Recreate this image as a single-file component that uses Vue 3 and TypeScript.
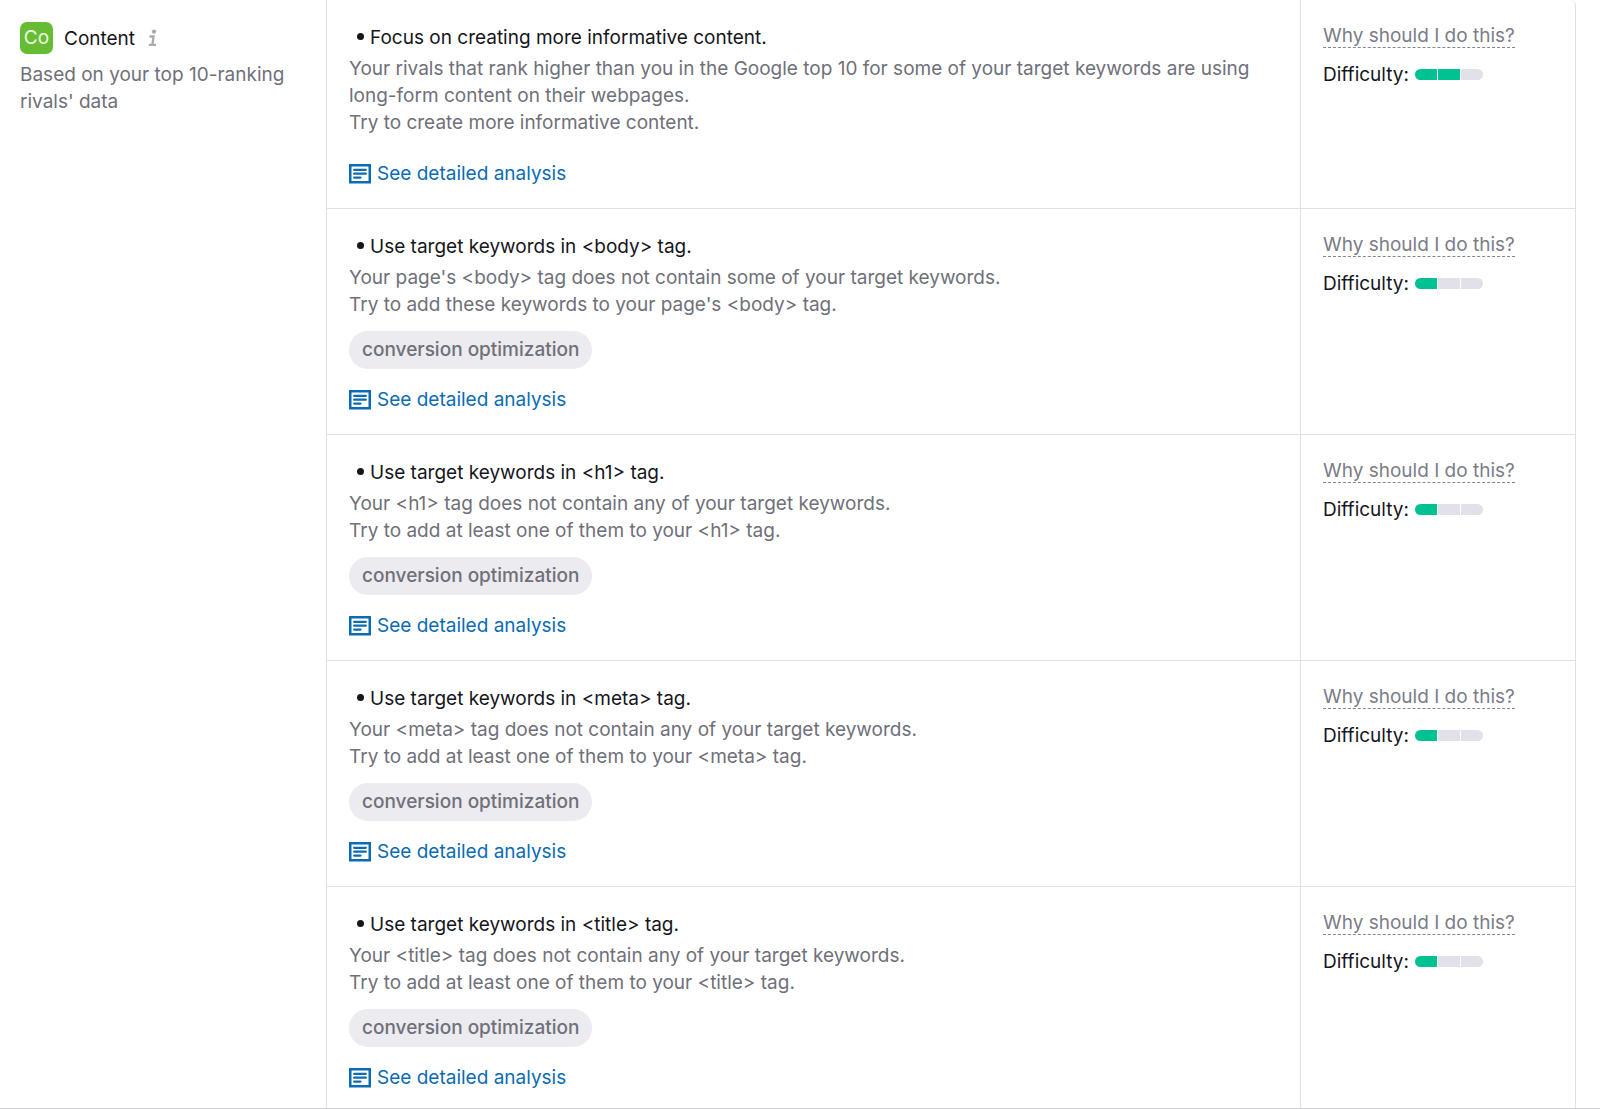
<script setup lang="ts">
interface Idea {
  title: string
  lines: string[]
  tags: string[]
  difficulty: number
}

const tag = 'conversion optimization'

const ideas: Idea[] = [
  {
    title: 'Focus on creating more informative content.',
    lines: [
      'Your rivals that rank higher than you in the Google top 10 for some of your target keywords are using long-form content on their webpages.',
      'Try to create more informative content.',
    ],
    tags: [],
    difficulty: 2,
  },
  {
    title: 'Use target keywords in <body> tag.',
    lines: [
      "Your page's <body> tag does not contain some of your target keywords.",
      "Try to add these keywords to your page's <body> tag.",
    ],
    tags: [tag],
    difficulty: 1,
  },
  ...['h1', 'meta', 'title'].map((name) => ({
    title: `Use target keywords in <${name}> tag.`,
    lines: [
      `Your <${name}> tag does not contain any of your target keywords.`,
      `Try to add at least one of them to your <${name}> tag.`,
    ],
    tags: [tag],
    difficulty: 1,
  })),
]
</script>

<template>
  <main class="page">
    <section class="card">
      <aside class="category">
        <header class="category-head">
          <span class="badge">Co</span>
          <h2 class="category-name">Content</h2>
          <button class="info" type="button" aria-label="About content ideas">
            <svg width="10" height="18" viewBox="0 0 10 18" aria-hidden="true">
              <circle cx="6" cy="2.6" r="2.2" fill="#a9abb0" />
              <path d="M1.5 7.5H5.6L4.4 15.6M0.8 15.8H8" fill="none" stroke="#a9abb0" stroke-width="2.3" />
            </svg>
          </button>
        </header>
        <p class="text">Based on your top 10-ranking rivals' data</p>
      </aside>

      <div class="ideas">
        <article v-for="idea in ideas" :key="idea.title" class="idea">
          <div class="idea-body">
            <h3 class="idea-title"><span class="bullet"></span>{{ idea.title }}</h3>
            <p v-for="line in idea.lines" :key="line" class="text">{{ line }}</p>
            <div v-if="idea.tags.length" class="tags">
              <span v-for="name in idea.tags" :key="name" class="tag">{{ name }}</span>
            </div>
            <a class="analysis" :class="{ spaced: !idea.tags.length }" href="#">
              <svg width="22" height="20" viewBox="0 0 22 20" aria-hidden="true">
                <rect x="1.25" y="1.25" width="19.5" height="17" fill="none" stroke="#0b6cb3" stroke-width="2.5" />
                <path
                  d="M5.2 5.8H16.8M5.2 9.7H16.8M5.2 13.6H11.5"
                  fill="none"
                  stroke="#0b6cb3"
                  stroke-width="2.3"
                  stroke-linecap="round"
                />
              </svg>
              See detailed analysis
            </a>
          </div>
          <div class="idea-side">
            <button class="why" type="button">Why should I do this?</button>
            <div class="difficulty">
              <span>Difficulty:</span>
              <span class="meter" role="img" :aria-label="`${idea.difficulty} of 3`">
                <i v-for="n in 3" :key="n" class="segment" :class="{ on: n <= idea.difficulty }"></i>
              </span>
            </div>
          </div>
        </article>
      </div>
    </section>
  </main>
</template>

<style>
body {
  margin: 0;
  background: #fff;
}
</style>

<style scoped>
.page {
  font-family: Inter, 'Liberation Sans', sans-serif;
  font-size: 19px;
  line-height: 27px;
  color: #15161c;
  padding-right: 24px;
  border-bottom: 1px solid #cfcfd1;
}

.card {
  display: grid;
  grid-template-columns: 326px 1fr;
  border-right: 1px solid #dfdfe2;
  border-top-right-radius: 6px;
}

h2,
h3,
p {
  margin: 0;
  font-size: inherit;
  font-weight: 400;
}

button {
  font: inherit;
  padding: 0;
  border: 0;
  background: none;
  cursor: pointer;
}

.category {
  padding: 22px 20px;
}

.category-head {
  display: flex;
  align-items: center;
  margin-bottom: 7px;
}

.badge {
  width: 33px;
  height: 32px;
  line-height: 32px;
  margin-right: 11px;
  border-radius: 7px;
  background: #66bd33;
  color: #effbe4;
  text-align: center;
}

.info {
  display: flex;
  margin-left: 13px;
}

.text {
  color: #6f7079;
}

.ideas {
  border-left: 1px solid #e0e1e4;
}

.idea {
  display: grid;
  grid-template-columns: 1fr 275px;
  border-bottom: 1px solid #e0e1e4;
}

.idea:last-child {
  height: 221px;
  border-bottom: 0;
}

.idea-body {
  padding: 24px 22px 21px;
}

.idea-title {
  display: flex;
  align-items: center;
  margin-bottom: 4px;
}

.bullet {
  width: 7px;
  height: 7px;
  margin: 0 6px 2px 8px;
  border-radius: 50%;
  background: #15161c;
}

.tags {
  display: flex;
  gap: 8px;
  margin: 13px 0 17px;
}

.tag {
  padding: 0 13px;
  border-radius: 19px;
  line-height: 38px;
  font-weight: 500;
  background: #ebebf0;
  color: #6f7079;
}

.analysis {
  display: flex;
  align-items: center;
  gap: 6px;
  width: fit-content;
  color: #0b6cb3;
  text-decoration: none;
}

.analysis.spaced {
  margin-top: 24px;
}

.idea-side {
  padding: 24px 22px 0;
  border-left: 1px solid #e0e1e4;
}

.why {
  display: block;
  height: 24px;
  line-height: 24px;
  border-bottom: 1px dashed #85868f;
  box-sizing: border-box;
  color: #7b7d87;
}

.difficulty {
  display: flex;
  align-items: center;
  gap: 6px;
  margin-top: 13px;
}

.meter {
  display: flex;
  gap: 1px;
  border-radius: 6px;
  overflow: hidden;
}

.segment {
  width: 22px;
  height: 11px;
  background: #e0e1e9;
}

.segment.on {
  background: #00c192;
}
</style>
